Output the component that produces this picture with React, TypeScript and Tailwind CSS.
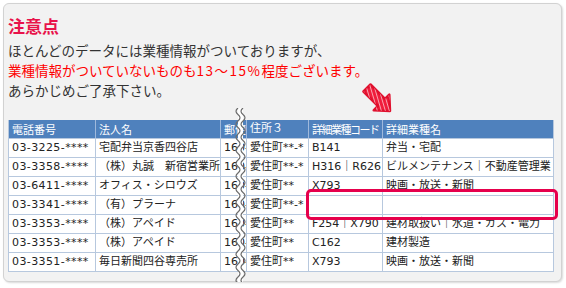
import React from "react";

const rows = [
  ["03-3225-****", "宅配弁当京香四谷店", "160-0005", "愛住町**-*", "B141", "弁当・宅配"],
  ["03-3358-****", "（株）丸誠　新宿営業所", "160-0005", "愛住町**-*", "H316｜R626", "ビルメンテナンス｜不動産管理業"],
  ["03-6411-****", "オフィス・シロウズ", "160-0005", "愛住町**", "X793", "映画・放送・新聞"],
  ["03-3341-****", "（有）プラーナ", "160-0005", "愛住町**-*", "", ""],
  ["03-3353-****", "（株）アペイド", "160-0005", "愛住町**", "F254｜X790", "建材取扱い｜水道・ガス・電力"],
  ["03-3353-****", "（株）アペイド", "160-0005", "愛住町**", "C162", "建材製造"],
  ["03-3351-****", "毎日新聞四谷専売所", "160-0005", "愛住町**", "X793", "映画・放送・新聞"],
];

function Wave() {
  const h = 174;
  const seg = 6.5;
  let left = "M4 0";
  let right = "M9 0";
  const n = Math.ceil(h / seg);
  for (let i = 0; i < n; i++) {
    const y0 = i * seg;
    const dir = i % 2 === 0 ? -2.5 : 2.5;
    left += ` Q${4 + dir * 1.6} ${y0 + seg / 2} 4 ${y0 + seg}`;
    right += ` Q${9 + dir * 1.6} ${y0 + seg / 2} 9 ${y0 + seg}`;
  }
  return (
    <svg width="14" height={h} viewBox={`0 0 14 ${h}`} className="absolute left-[230px] top-[104px]">
      <rect x="4" y="0" width="5" height={h} fill="#ffffff" />
      <path d={left} fill="none" stroke="#6e6e6e" strokeWidth="1.2" />
      <path d={right} fill="none" stroke="#6e6e6e" strokeWidth="1.2" />
    </svg>
  );
}

function Arrow() {
  const pts = "8.5,5.5 23,20 27.3,15.7 28,32 11.7,31.3 16,27 1.5,12.5";
  return (
    <svg width="30" height="34" viewBox="0 0 30 34" className="absolute left-[358px] top-[75px]">
      <defs>
        <clipPath id="ac">
          <polygon points={pts} />
        </clipPath>
      </defs>
      <polygon points={pts} fill="#f01e3c" stroke="#e0102e" strokeWidth="2.5" strokeLinejoin="round" />
      <g clipPath="url(#ac)" stroke="#ffffff" strokeWidth="0.8" opacity="0.75">
        {[0, 4, 8, 12, 16, 20, 24, 28, 32, 36, 40].map((o) => (
          <line key={o} x1={o - 10} y1={0} x2={o} y2={34} />
        ))}
      </g>
    </svg>
  );
}

export default function App() {
  const cell = "shrink-0 overflow-hidden whitespace-nowrap pl-[3px] leading-[18px] border-r";
  return (
    <div className="w-[566px] h-[288px] bg-white p-[3px]" style={{ fontFamily: '"Noto Sans CJK JP", sans-serif' }}>
      <div className="relative w-[559px] rounded-[6px] border border-[#d2d2d2] bg-[#f2f2f2] pt-[10px] pb-[9px] pl-1 shadow-[1px_1px_2px_rgba(0,0,0,0.15)]">
        <div className="text-[17px] font-bold leading-[24px] text-[#e8134b]">注意点</div>
        <div className="mt-[2px] text-[13.5px] leading-[20px] text-[#333333]">
          <div>ほとんどのデータには業種情報がついておりますが、</div>
          <div className="text-[#ff0000]">
            業種情報がついていないものも<span className="tracking-[1.5px]">13～15%</span>程度ございます。
          </div>
          <div>あらかじめご了承下さい。</div>
        </div>
        <div
          className="mt-5 w-[546px] border-l border-[#b7c8de] text-[11px]"
          style={{ fontFamily: '"DejaVu Sans", "Noto Sans CJK JP", sans-serif' }}
        >
          <div className="flex h-[19px] border-b border-[#b7c8de] bg-[#4f81bd] text-white">
            <div className={`${cell} w-[87px] border-[#9fb9dc]`} style={{ fontFamily: '"Noto Sans CJK JP", sans-serif' }}>電話番号</div>
            <div className={`${cell} w-[125px] border-[#9fb9dc]`} style={{ fontFamily: '"Noto Sans CJK JP", sans-serif' }}>法人名</div>
            <div className={`${cell} w-[26px] border-[#9fb9dc]`} style={{ fontFamily: '"Noto Sans CJK JP", sans-serif' }}>郵便番号</div>
            <div className={`${cell} w-[62px] border-[#9fb9dc]`}>住所３</div>
            <div className={`${cell} w-[74px] border-[#9fb9dc] tracking-[-1.5px]`} style={{ fontFamily: '"Noto Sans CJK JP", sans-serif' }}>詳細業種コード</div>
            <div className={`${cell} w-[171px] border-[#b7c8de]`} style={{ fontFamily: '"Noto Sans CJK JP", sans-serif' }}>詳細業種名</div>
          </div>
          {rows.map((r, i) => (
            <div key={i} className="flex h-[19px] border-b border-[#b7c8de] bg-white text-[#222222]">
              <div className={`${cell} w-[87px] border-[#b7c8de] tracking-[0.4px]`}>{r[0]}</div>
              <div className={`${cell} w-[125px] border-[#b7c8de]`}>{r[1]}</div>
              <div className={`${cell} w-[26px] border-[#b7c8de]`}>{r[2]}</div>
              <div className={`${cell} w-[62px] border-[#b7c8de]`}>{r[3]}</div>
              <div className={`${cell} w-[74px] border-[#b7c8de]`}>{r[4]}</div>
              <div className={`${cell} w-[171px] border-[#b7c8de]`}>{r[5]}</div>
            </div>
          ))}
        </div>
        <Arrow />
        <Wave />
        <div className="absolute left-[302px] top-[185px] h-[31px] w-[252px] rounded-[5px] border-[3px] border-[#e6004c]" />
      </div>
    </div>
  );
}
